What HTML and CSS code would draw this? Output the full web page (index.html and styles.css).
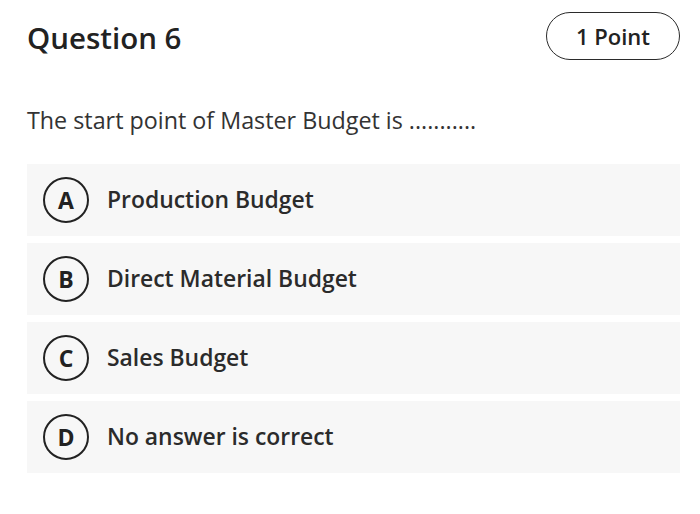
FILE: index.html
```html
<!DOCTYPE html>
<html>
<head>
<meta charset="utf-8">
<link rel="stylesheet" href="styles.css">
</head>
<body>
<div class="quiz">
  <div class="header">
    <h1 class="title">Question 6</h1>
    <div class="badge">1 Point</div>
  </div>
  <p class="prompt">The start point of Master Budget is ...........</p>
  <ul class="options">
    <li class="option"><span class="letter">A</span><span class="label">Production Budget</span></li>
    <li class="option"><span class="letter">B</span><span class="label">Direct Material Budget</span></li>
    <li class="option"><span class="letter">C</span><span class="label">Sales Budget</span></li>
    <li class="option"><span class="letter">D</span><span class="label">No answer is correct</span></li>
  </ul>
</div>
</body>
</html>
```
FILE: styles.css
```css
html, body {
  margin: 0;
  padding: 0;
  background: #ffffff;
}
body {
  font-family: "Open Sans", "Noto Sans", sans-serif;
  color: #2b2b2b;
}
.quiz {
  padding: 12px 20px 0 27px;
}
.header {
  display: flex;
  justify-content: space-between;
  align-items: center;
  height: 48px;
}
.title {
  margin: 0;
  font-size: 29.5px;
  font-weight: 600;
  line-height: 1;
  color: #222;
  padding-top: 4px;
}
.badge {
  box-sizing: border-box;
  width: 134px;
  height: 48px;
  border: 1.5px solid #2b2b2b;
  border-radius: 24px;
  display: flex;
  align-items: center;
  justify-content: center;
  font-size: 22px;
  font-weight: 600;
  color: #222;
}
.prompt {
  margin: 45px 0 0 0;
  font-size: 23.3px;
  line-height: 30px;
  color: #333;
}
.options {
  list-style: none;
  margin: 29px 0 0 0;
  padding: 0;
  display: flex;
  flex-direction: column;
  gap: 7.5px;
}
.option {
  height: 71.5px;
  background: #f7f7f7;
  display: flex;
  align-items: center;
  padding-left: 16px;
}
.letter {
  box-sizing: border-box;
  width: 46px;
  height: 46px;
  border: 2.5px solid #222;
  border-radius: 50%;
  display: flex;
  align-items: center;
  justify-content: center;
  font-size: 23px;
  font-weight: 700;
  color: #222;
}
.label {
  margin-left: 18px;
  font-size: 22.9px;
  font-weight: 600;
  color: #2b2b2b;
}
```
